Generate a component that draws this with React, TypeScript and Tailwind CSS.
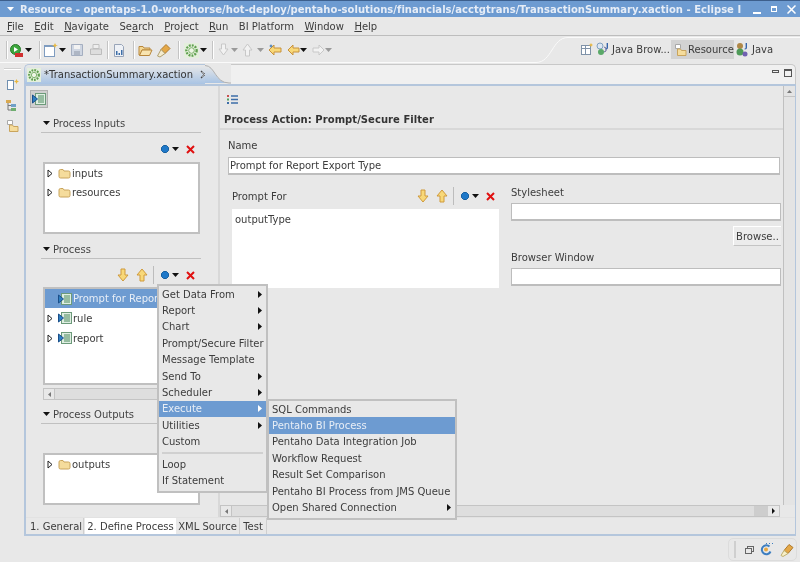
import type { ReactNode } from "react";

const FONT = "[font-family:'DejaVu_Sans',sans-serif]";

function Caret({ dim }: { dim?: boolean }) {
  return (
    <svg width="7" height="4" viewBox="0 0 7 4" className="shrink-0">
      <path d="M0 0h7L3.500 4z" fill={dim ? "#9a9a9a" : "#111"} />
    </svg>
  );
}

function Folder({ size = 13 }: { size?: number }) {
  return (
    <svg width={size} height={size} viewBox="0 0 13 13" className="shrink-0">
      <path d="M1 4q0-1.500 1.500-1.500h2.500l1 1.500h4.500q1.500 0 1.500 1.500v4q0 1.500-1.500 1.500h-8q-1.500 0-1.500-1.500z" fill="#f5dc9c" stroke="#c9a45c" />
    </svg>
  );
}

function TreeArrow() {
  return (
    <svg width="6" height="9" viewBox="0 0 6 9" className="shrink-0">
      <path d="M1 1l4 3.500-4 3.500z" fill="#fff" stroke="#222" />
    </svg>
  );
}

function ActionIcon() {
  return (
    <svg width="14" height="14" viewBox="0 0 14 14" className="shrink-0">
      <rect x="3.500" y="1.500" width="10" height="11" fill="#dfeee2" stroke="#6c9a7a" />
      <path d="M6 4h6M6 6h6M6 8h6M6 10h6" stroke="#4d8a5f" />
      <path d="M0.500 3l5 4-5 4z" fill="#2f7fc0" stroke="#1a4f8a" />
    </svg>
  );
}

function ArrowV({ up }: { up?: boolean }) {
  return (
    <svg width="12" height="14" viewBox="0 0 12 14" className={up ? "" : "rotate-180"}>
      <path d="M6 1l5 6H8v6H4V7H1z" fill="#f8d878" stroke="#cf9a3c" />
    </svg>
  );
}

function RedX() {
  return (
    <svg width="9" height="9" viewBox="0 0 9 9">
      <path d="M1 1l7 7M8 1L1 8" stroke="#e01010" strokeWidth="2" />
    </svg>
  );
}

function BlueDot() {
  return (
    <svg width="8" height="8" viewBox="0 0 8 8">
      <path d="M2.500 0.500h3l2 2v3l-2 2h-3l-2-2v-3z" fill="#1f78c8" stroke="#18609f" />
    </svg>
  );
}

function Gear({ size = 16 }: { size?: number }) {
  return (
    <svg width={size} height={size} viewBox="0 0 16 16" className="shrink-0">
      <rect x="0" y="0" width="16" height="16" fill="#e4efdc" />
      <circle cx="8" cy="8" r="5.500" fill="none" stroke="#5fa04e" strokeWidth="2.500" strokeDasharray="2 1.200" />
      <circle cx="8" cy="8" r="3" fill="#eef6e6" stroke="#74ad62" />
    </svg>
  );
}

function Sep({ h = 18 }: { h?: number }) {
  return <div className="w-[2px] shrink-0 bg-[#c4c4c4] border-r border-white" style={{ height: h }} />;
}

function Gap({ w }: { w: number }) {
  return <span className="shrink-0" style={{ width: w }} />;
}

function Section({ title }: { title: string }) {
  return (
    <div className="ml-[15px] w-[160px] h-[17px] border-b border-[#c0c0c0] flex items-start gap-[3px] pl-[2px] pt-[1px] text-[#444] text-[10px] leading-[14px]">
      <span className="mt-[4px]"><Caret /></span>
      {title}
    </div>
  );
}

function ActionTools({ arrows }: { arrows?: boolean }) {
  return (
    <div className="flex items-center justify-end h-[16px]">
      {arrows && (
        <>
          <ArrowV />
          <span className="w-[7px]" />
          <ArrowV up />
          <span className="w-[5px]" />
          <div className="w-[1px] h-[18px] bg-[#bcbcbc]" />
          <span className="w-[7px]" />
        </>
      )}
      <BlueDot />
      <span className="w-[3px]" />
      <Caret />
      <span className="w-[7px]" />
      <RedX />
    </div>
  );
}

function TreeRow({ icon, label, sel, h = 19 }: { icon: ReactNode; label: string; sel?: boolean; h?: number }) {
  return (
    <div className={`flex items-center pl-[2px] ${sel ? "bg-[#6d9bd1] text-[#e8eef6]" : "text-[#3c3c3c]"}`} style={{ height: h }}>
      <span className="w-[6px] mr-[3px] flex">{!sel && <TreeArrow />}</span>
      <span className="w-[2px]" />
      {icon}
      <span className="ml-[1px] whitespace-nowrap text-[10px]">{label}</span>
    </div>
  );
}

function TextBox({ w, children }: { w: string; children?: ReactNode }) {
  return <div className={`${w} h-[18px] bg-white border border-[#bdbdbd] border-b-2 px-[1px] text-[10px] leading-[15px] text-[#3c3c3c] whitespace-nowrap`}>{children}</div>;
}

function MenuItem({ label, sub, sel }: { label: string; sub?: boolean; sel?: boolean }) {
  return (
    <div className={`h-[16.400px] flex items-center justify-between pl-[3px] pr-[4px] text-[10px] whitespace-nowrap ${sel ? "bg-[#6d9bd1] text-[#e8eef6]" : "text-[#3c3c3c]"}`}>
      <span>{label}</span>
      {sub && <svg width="4" height="7" viewBox="0 0 4 7"><path d="M0 0l4 3.500-4 3.500z" fill={sel ? "#fff" : "#111"} /></svg>}
    </div>
  );
}

const menus = ["File", "Edit", "Navigate", "Search", "Project", "Run", "BI Platform", "Window", "Help"];
const mnemonic: Record<string, number> = { File: 0, Edit: 0, Navigate: 0, Search: 2, Project: 0, Run: 0, Window: 0, Help: 0 };

export default function App() {
  return (
    <div className={`relative w-[800px] h-[562px] overflow-hidden bg-[#e8e8e8] flex flex-col text-[10px] text-[#3c3c3c] blur-[0.35px] ${FONT}`}>
      {/* title bar */}
      <div className="h-[17px] shrink-0 bg-[#6d9bd1] border-t border-[#3d5f8c] flex items-center pl-[7px] text-[#e6edf7] overflow-hidden">
        <svg width="7" height="4" viewBox="0 0 7 4" className="shrink-0"><path d="M0 0h7L3.500 4z" fill="#fff" /></svg>
        <span className="ml-[6px] whitespace-nowrap font-bold text-[10px] tracking-[0.03px] w-[733px]">Resource - opentaps-1.0-workhorse/hot-deploy/pentaho-solutions/financials/acctgtrans/TransactionSummary.xaction - Eclipse I</span>
        <div className="flex items-center gap-[10px]">
          <div className="w-[8px] h-[2px] mt-[7px] bg-white" />
          <div className="w-[6px] h-[6px] border border-white border-t-2" />
          <svg width="9" height="9" viewBox="0 0 9 9"><path d="M0.500 0.500l8 8M8.500 0.500l-8 8" stroke="#fff" strokeWidth="1.500" /></svg>
        </div>
      </div>

      {/* menu bar */}
      <div className="h-[19px] shrink-0 border-b border-[#bdbdbd] flex items-center pl-[7px] gap-[10.500px] text-[#3c3c3c]">
        {menus.map((m) => {
          const i = mnemonic[m];
          if (i === undefined) return <span key={m}>{m}</span>;
          return (
            <span key={m}>
              {m.slice(0, i)}<u>{m[i]}</u>{m.slice(i + 1)}
            </span>
          );
        })}
      </div>

      {/* toolbar */}
      <div className="relative h-[28px] shrink-0 flex items-center pl-[6px]">
        <Sep />
        <Gap w={1} />
        <svg width="15" height="15" viewBox="0 0 15 15" className="shrink-0"><circle cx="6.500" cy="6.500" r="5" fill="#3da63d" stroke="#2a7a2a" /><path d="M5 4l4 2.500L5 9z" fill="#fff" /><rect x="6" y="10" width="8" height="4" fill="#d03030" /></svg>
        <Gap w={1} /><Caret /><Gap w={7} />
        <Sep />
        <Gap w={2} />
        <svg width="15" height="15" viewBox="0 0 15 15" className="shrink-0"><rect x="1.500" y="2.500" width="10" height="11" fill="#fff" stroke="#7f9cc0" /><path d="M1.500 3h10" stroke="#7f9cc0" strokeWidth="2" /><path d="M12 0l1 2 2 .5-2 .5-1 2-1-2-2-.5 2-.5z" fill="#e8b840" /></svg>
        <Gap w={1} /><Caret /><Gap w={4} />
        <svg width="14" height="14" viewBox="0 0 14 14" className="shrink-0"><path d="M1.500 1.500h11v11h-11z" fill="#cfd6e2" stroke="#a4aec0" /><rect x="4" y="2" width="6" height="4" fill="#f2f2f2" /><rect x="4" y="8" width="6" height="4" fill="#aeb6c4" /></svg>
        <Gap w={5} />
        <svg width="14" height="14" viewBox="0 0 14 14" className="shrink-0"><path d="M4 1.500h6v4H4z" fill="#eee" stroke="#c0c0c0" /><path d="M1.500 6h11v5.500h-11z" fill="#ddd" stroke="#bcbcbc" /></svg>
        <Gap w={4} />
        <Sep />
        <Gap w={3} />
        <svg width="14" height="15" viewBox="0 0 14 15" className="shrink-0"><path d="M2.500 1.500h7l2 2v10h-9z" fill="#eef1f6" stroke="#98a4b8" /><path d="M4 8h1.500v4H4zM6.500 10H8v2H6.500zM9 7h1.500v5H9z" fill="#3d6ea8" /></svg>
        <Gap w={7} />
        <Sep />
        <Gap w={3} />
        <svg width="15" height="14" viewBox="0 0 15 14" className="shrink-0"><path d="M1 3.500h4l1 1.500h6v2H4l-2 5H1z" fill="#f4d894" stroke="#b8873c" /><path d="M4 7h10l-2.500 5.500H1.500z" fill="#f8e4b0" stroke="#b8873c" /></svg>
        <Gap w={4} />
        <svg width="15" height="15" viewBox="0 0 15 15" className="shrink-0"><path d="M9 1.500l4 4-5 5-4-4z" fill="#e4a848" stroke="#b07a2c" /><path d="M4 6.500l4 4-5 3.500-2.500-1z" fill="#f4ecd0" stroke="#b0a070" /></svg>
        <Gap w={6} />
        <Sep />
        <Gap w={4} />
        <Gear size={15} />
        <Gap w={1} /><Caret /><Gap w={5} />
        <Sep />
        <Gap w={4} />
        <svg width="11" height="14" viewBox="0 0 11 14" className="shrink-0"><path d="M3.500 1h4v5H10l-4.500 6L1 6h2.500z" fill="#f2f2f2" stroke="#c8c8c8" /></svg>
        <Gap w={2} /><Caret dim /><Gap w={4} />
        <svg width="11" height="14" viewBox="0 0 11 14" className="shrink-0"><path d="M5.500 1L10 7H7.500v6h-4V7H1z" fill="#f2f2f2" stroke="#c8c8c8" /></svg>
        <Gap w={4} /><Caret dim /><Gap w={4} />
        <svg width="14" height="12" viewBox="0 0 14 12" className="shrink-0"><path d="M6 1v3h7v4H6v3L1 6z" fill="#f8d878" stroke="#c8923c" /><path d="M3 0l.6 1.400L5 2l-1.400.6L3 4l-.6-1.400L1 2l1.400-.6z" fill="#2f6fb0" /></svg>
        <Gap w={5} />
        <svg width="13" height="12" viewBox="0 0 13 12" className="shrink-0"><path d="M6 1v3h6v4H6v3L1 6z" fill="#f8d878" stroke="#c8923c" /></svg>
        <Caret />
        <Gap w={5} />
        <svg width="13" height="12" viewBox="0 0 13 12" className="shrink-0"><path d="M7 1v3H1v4h6v3l5-5z" fill="#f2f2f2" stroke="#c8c8c8" /></svg>
        <Caret dim />

        {/* perspective switcher */}
        <svg className="absolute left-0 top-0" width="800" height="28" viewBox="0 0 800 28">
          <path d="M0 26.500H536C552 26.500 552 1.500 568 1.500H800" fill="none" stroke="#fafafa" strokeWidth="1" />
        </svg>
        <div className="absolute left-[580px] top-[4px] h-[19px] flex items-center">
          <svg width="13" height="13" viewBox="0 0 13 13" className="shrink-0"><rect x="1.500" y="2.500" width="9" height="9" fill="#fff" stroke="#7f92a8" /><path d="M1.500 5.500h9M5.500 3v9" stroke="#7f92a8" /><path d="M11 0l.7 1.300L13 2l-1.300.7L11 4l-.7-1.300L9 2l1.300-.7z" fill="#e8b840" /></svg>
          <Gap w={2} />
          <svg width="16" height="15" viewBox="0 0 16 15" className="shrink-0"><circle cx="5" cy="4" r="3" fill="#dce6f2" stroke="#80a0c0" /><circle cx="6" cy="10" r="3" fill="#5aa868" /><path d="M9 5l2 1v3l-2 1" fill="none" stroke="#6a6a9a" /><text x="11" y="6" fontSize="7" fontWeight="700" fill="#2f5fa8">J</text></svg>
          <span className="ml-[1px] w-[58px] whitespace-nowrap">Java Brow...</span>
          <div className="ml-[1px] h-[19px] w-[63px] bg-[#d2d2d2] flex items-center pl-[3px] shrink-0">
            <svg width="13" height="14" viewBox="0 0 13 14" className="shrink-0"><path d="M1.500 1.500h5v4h-5z" fill="#fff" stroke="#a8a8a8" /><path d="M3.500 6h3l1 1.500H12v5H3.500z" fill="#f5dc9c" stroke="#c9a45c" /></svg>
            <span className="ml-[1px] whitespace-nowrap">Resource</span>
          </div>
          <svg width="16" height="15" viewBox="0 0 16 15" className="ml-[1px] shrink-0"><circle cx="5" cy="4" r="3" fill="#b08848" /><circle cx="5" cy="10" r="3.500" fill="#4f9a58" /><circle cx="10" cy="12" r="2.500" fill="#7060b0" /><text x="10" y="6" fontSize="7" fontWeight="700" fill="#2f5fa8">J</text></svg>
          <span className="ml-[1px] whitespace-nowrap">Java</span>
        </div>
      </div>

      {/* workbench */}
      <div className="h-[472px] shrink-0 flex">
        {/* left trim */}
        <div className="w-[24px] shrink-0 flex flex-col items-center pt-[4px]">
          <div className="w-[17px] h-[2px] bg-[#cfcfcf] border-b border-white" />
          <svg width="13" height="13" viewBox="0 0 13 13" className="mt-[8px]"><rect x="1.500" y="2.500" width="6" height="9" fill="#fff" stroke="#6f8fb0" /><path d="M10.500 1l.8 1.700L13 3.500l-1.700.8-.8 1.700-.8-1.700L8 3.500l1.700-.8z" fill="#e8b840" /></svg>
          <svg width="14" height="13" viewBox="0 0 14 13" className="mt-[8px]"><rect x="1" y="1" width="5" height="3" fill="#d8a850" /><rect x="6" y="5" width="5" height="3" fill="#6fa0c8" /><rect x="6" y="9" width="5" height="3" fill="#6fae70" /><path d="M3 4v7h3M3 6.500h3" stroke="#777" fill="none" /></svg>
          <svg width="13" height="14" viewBox="0 0 13 14" className="mt-[7px]"><path d="M1.500 1.500h5v4h-5z" fill="#fff" stroke="#a8a8a8" /><path d="M3.500 6h3l1 1.500H12v5H3.500z" fill="#f5dc9c" stroke="#c9a45c" /></svg>
        </div>

        {/* editor */}
        <div className="w-[772px] shrink-0 h-[472px] flex flex-col">
          {/* tab strip */}
          <div className="relative h-[20px] shrink-0 flex">
            <div className="w-[181px] shrink-0 rounded-tl-[5px] border-t border-l border-[#b4c6dc] bg-gradient-to-b from-[#e8e8e8] to-[#a9c4e4] flex items-center pl-[2px]">
              <Gear size={14} />
              <span className="ml-[3px] whitespace-nowrap text-[#333]">*TransactionSummary.xaction</span>
              <svg width="9" height="9" viewBox="0 0 9 9" className="ml-[7px] shrink-0"><path d="M1 1l7 7M8 1L1 8" stroke="#444" strokeWidth="1.200" /><path d="M2 2l5 5M7 2L2 7" stroke="#fff" strokeWidth="0.500" /></svg>
            </div>
            <svg width="26" height="20" viewBox="0 0 26 20" className="shrink-0">
              <defs>
                <linearGradient id="tabfill" x1="0" y1="0" x2="0" y2="1">
                  <stop offset="0" stopColor="#e8e8e8" />
                  <stop offset="1" stopColor="#a9c4e4" />
                </linearGradient>
              </defs>
              <path d="M0 1.500C10 1.500 10 19 24 19H0z" fill="url(#tabfill)" />
              <path d="M0 1.500C10 1.500 10 19 24 19H26" fill="none" stroke="#b0b0b0" />
            </svg>
            <div className="flex-1 rounded-tr-[5px] border-t border-r border-[#c8c8c8] bg-[#f0f0f0] flex justify-end items-start pt-[4px] pr-[3px] gap-[5px]">
              <div className="w-[7px] h-[3px] border border-[#555] mt-[1px]" />
              <div className="w-[8px] h-[8px] border border-[#555] border-t-2" />
            </div>
          </div>

          {/* editor body */}
          <div className="h-[452px] flex flex-col border-l-2 border-r border-b-2 border-t-2 border-[#b4c6dc]">
            <div className="h-[431px] shrink-0 flex">
              {/* left pane */}
              <div className="w-[194px] shrink-0 border-r-2 border-[#d8d8d8] overflow-hidden">
                <div className="mt-[4px] ml-[4px] w-[18px] h-[18px] bg-[#cfcfcf] border border-[#b0b0b0] flex items-center justify-center">
                  <ActionIcon />
                </div>
                <div className="mt-[8px]"><Section title="Process Inputs" /></div>
                <div className="mt-[8px] w-[169px]"><ActionTools /></div>
                <div className="mt-[5px] ml-[17px] w-[157px] h-[72px] bg-white border-2 border-[#c0c0c0]">
                  <TreeRow icon={<Folder />} label="inputs" />
                  <TreeRow icon={<Folder />} label="resources" />
                </div>
                <div className="mt-[8px]"><Section title="Process" /></div>
                <div className="mt-[8px] w-[169px]"><ActionTools arrows /></div>
                <div className="mt-[4px] ml-[17px] w-[157px] h-[98px] bg-white border-2 border-[#c0c0c0]">
                  <TreeRow sel icon={<ActionIcon />} label="Prompt for Report" />
                  <TreeRow icon={<ActionIcon />} label="rule" h={20} />
                  <TreeRow icon={<ActionIcon />} label="report" h={20} />
                </div>
                <div className="mt-[3px] ml-[17px] w-[157px] h-[12px] bg-[#dedede] border border-[#c4c4c4] flex">
                  <div className="w-[11px] bg-[#e8e8e8] border-r border-[#c4c4c4] flex items-center justify-center">
                    <svg width="3" height="5" viewBox="0 0 3 5"><path d="M3 0L0 2.500 3 5z" fill="#777" /></svg>
                  </div>
                </div>
                <div className="mt-[7px]"><Section title="Process Outputs" /></div>
                <div className="mt-[29px] ml-[17px] w-[157px] h-[52px] bg-white border-2 border-[#c0c0c0]">
                  <TreeRow icon={<Folder />} label="outputs" />
                </div>
              </div>

              {/* right pane */}
              <div className="flex-1 min-w-0 flex flex-col overflow-hidden">
                <div className="flex-1 flex min-h-0">
                  <div className="w-[563px] shrink-0 overflow-hidden">
                    <div className="ml-[7px] mt-[8px] h-[12px]">
                      <svg width="11" height="11" viewBox="0 0 11 11"><path d="M4 2h7M4 5.500h7M4 9h7" stroke="#3d6ea8" strokeWidth="1.500" /><rect x="0" y="1" width="2" height="2" fill="#c85050" /><rect x="0" y="4.500" width="2" height="2" fill="#50a060" /><rect x="0" y="8" width="2" height="2" fill="#3d6ea8" /></svg>
                    </div>
                    <div className="mt-[7px] h-[17px] border-b-2 border-[#d8d8d8] pl-[4px] text-[10px] leading-[14px] font-bold text-[#333] tracking-[0.05px]">Process Action: Prompt/Secure Filter</div>
                    <div className="mt-[9px] ml-[8px] leading-[13px]">Name</div>
                    <div className="mt-[5px] ml-[8px]"><TextBox w="w-[552px]">Prompt for Report Export Type</TextBox></div>
                    <div className="flex mt-[11px]">
                      <div className="ml-[12px] w-[267px] shrink-0 pt-[2px]">
                        <div className="flex items-center justify-between h-[16px]">
                          <span>Prompt For</span>
                          <div className="pr-[4px]"><ActionTools arrows /></div>
                        </div>
                        <div className="mt-[5px] h-[79px] bg-white pl-[3px] pt-[4px] leading-[14px]">outputType</div>
                      </div>
                      <div className="ml-[12px] w-[270px] shrink-0">
                        <div className="leading-[13px]">Stylesheet</div>
                        <div className="mt-[4px]"><TextBox w="w-[270px]" /></div>
                        <div className="mt-[5px] flex justify-end">
                          <div className="w-[48px] h-[20px] bg-[#ececec] border-t border-l border-white border-b border-b-[#c4c4c4] flex items-center justify-center">Browse..</div>
                        </div>
                        <div className="mt-[5px] leading-[13px]">Browser Window</div>
                        <div className="mt-[4px]"><TextBox w="w-[270px]" /></div>
                      </div>
                    </div>
                  </div>
                  {/* vertical scrollbar */}
                  <div className="w-[12px] shrink-0 border-l border-[#c0c0c0] bg-[#e4e4e4]">
                    <div className="h-[11px] border-b border-[#c4c4c4] flex items-center justify-center">
                      <svg width="5" height="3" viewBox="0 0 5 3"><path d="M0 3l2.500-3L5 3z" fill="#777" /></svg>
                    </div>
                  </div>
                </div>
                {/* horizontal scrollbar */}
                <div className="h-[12px] shrink-0 w-[560px] bg-[#dedede] border border-[#c4c4c4] flex">
                  <div className="w-[11px] bg-[#e8e8e8] border-r border-[#c4c4c4] flex items-center justify-center">
                    <svg width="3" height="5" viewBox="0 0 3 5"><path d="M3 0L0 2.500 3 5z" fill="#777" /></svg>
                  </div>
                  <div className="flex-1" />
                  <div className="w-[14px] bg-[#cdcdcd]" />
                  <div className="w-[11px] bg-[#e8e8e8] flex items-center justify-center">
                    <svg width="3" height="6" viewBox="0 0 3 6"><path d="M0 0l3 3-3 3z" fill="#111" /></svg>
                  </div>
                </div>
              </div>
            </div>
            {/* page tabs */}
            <div className="flex-1 flex items-stretch border-t border-[#e2e2e2] text-[10px] whitespace-nowrap">
              <div className="w-[58px] flex items-center pl-[4px] border-r border-[#cfcfcf]">1. General</div>
              <div className="ml-[1px] w-[91px] flex items-center justify-center bg-white">2. Define Process</div>
              <div className="w-[64px] flex items-center justify-center border-r border-[#cfcfcf]">XML Source</div>
              <div className="w-[27px] flex items-center justify-center border-r border-[#cfcfcf]">Test</div>
            </div>
          </div>
        </div>
      </div>

      {/* status bar */}
      <div className="flex-1 flex justify-end items-start pt-[2px] pr-[3px]">
        <div className="w-[69px] h-[23px] rounded-[5px] border border-[#dcdcdc] flex items-center pl-[5px]">
          <div className="w-[2px] h-[17px] bg-[#cfcfcf]" />
          <svg width="9" height="8" viewBox="0 0 9 8" className="ml-[9px]"><rect x="2.500" y="0.500" width="6" height="5" fill="none" stroke="#666" /><rect x="0.500" y="2.500" width="6" height="5" fill="#e8e8e8" stroke="#666" /></svg>
          <svg width="13" height="13" viewBox="0 0 13 13" className="ml-[6px]"><path d="M9.500 3.500a4.500 4.500 0 1 0 1 5" fill="none" stroke="#3d7ec0" strokeWidth="2" /><circle cx="6" cy="6.500" r="2" fill="#e8a840" /><path d="M6 1l1-1M9 1l1-1M12 1l1-1" stroke="#3d7ec0" /></svg>
          <svg width="14" height="14" viewBox="0 0 14 14" className="ml-[7px]"><path d="M9 1.500l4 3-5 6-4-3z" fill="#e4a848" stroke="#b07a2c" /><path d="M4 7.500l4 3-5 3-2-1z" fill="#f8f0c8" stroke="#c0b070" /></svg>
        </div>
      </div>

      {/* context menus */}
      <div className="absolute left-[157px] top-[284px] w-[111px] bg-[#e8e8e8] border-2 border-[#c0c0c0] pb-[2px]">
        <MenuItem label="Get Data From" sub />
        <MenuItem label="Report" sub />
        <MenuItem label="Chart" sub />
        <MenuItem label="Prompt/Secure Filter" />
        <MenuItem label="Message Template" />
        <MenuItem label="Send To" sub />
        <MenuItem label="Scheduler" sub />
        <MenuItem label="Execute" sub sel />
        <MenuItem label="Utilities" sub />
        <MenuItem label="Custom" />
        <div className="h-[6px] flex items-center px-[3px]"><div className="w-full h-[2px] bg-[#d0d0d0]" /></div>
        <MenuItem label="Loop" />
        <MenuItem label="If Statement" />
      </div>
      <div className="absolute left-[267px] top-[399px] w-[190px] bg-[#e8e8e8] border-2 border-[#c0c0c0] pb-[2px]">
        <MenuItem label="SQL Commands" />
        <MenuItem label="Pentaho BI Process" sel />
        <MenuItem label="Pentaho Data Integration Job" />
        <MenuItem label="Workflow Request" />
        <MenuItem label="Result Set Comparison" />
        <MenuItem label="Pentaho BI Process from JMS Queue" />
        <MenuItem label="Open Shared Connection" sub />
      </div>
    </div>
  );
}
